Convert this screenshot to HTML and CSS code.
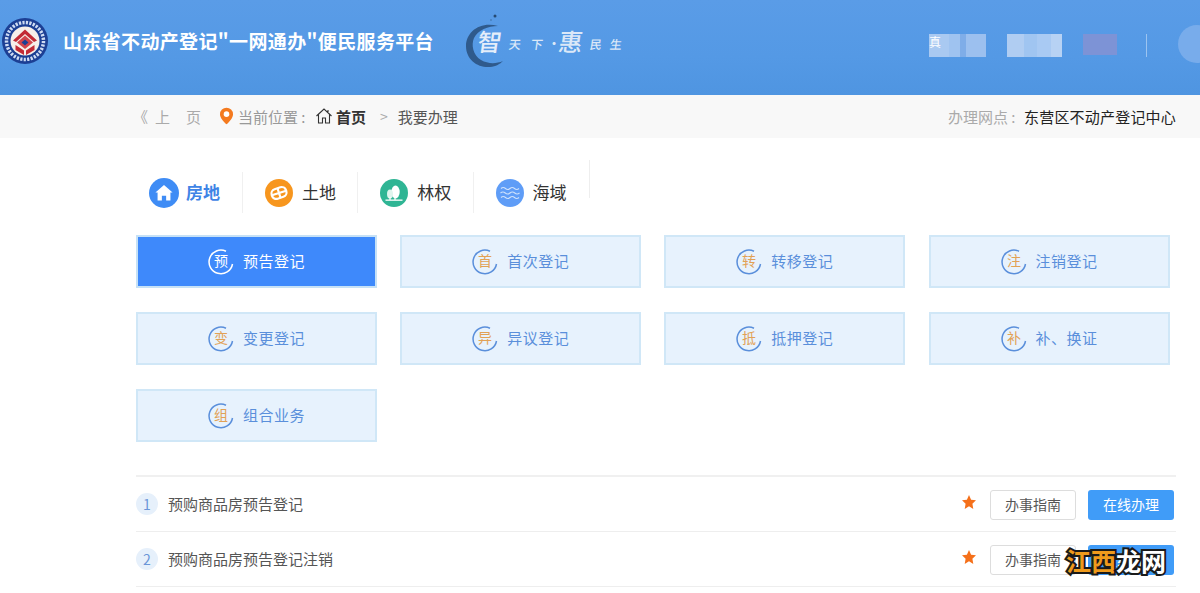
FILE: index.html
```html
<!DOCTYPE html>
<html lang="zh-CN">
<head>
<meta charset="utf-8">
<title>不动产登记</title>
<link rel="stylesheet" href="styles.css">
</head>
<body>
<header class="top">
  <svg class="logo" viewBox="0 0 46 46" aria-hidden="true">
    <circle cx="23" cy="23" r="23" fill="#1c3f94"/>
    <circle cx="23" cy="23" r="18.500" fill="none" stroke="#cfdcf3" stroke-width="3.500" stroke-dasharray="2.200 1.300"/>
    <circle cx="23" cy="23" r="16" fill="#1c3f94"/>
    <circle cx="23" cy="23" r="14.500" fill="#f6efe9"/>
    <path d="M11 22.500 23 11.500 35 22.500 32 24 23 16 14 24Z" fill="#c22a35"/>
    <path d="M15 24.500 23 17.500 31 24.500 23 31Z" fill="#d2444c"/>
    <path d="M19.500 24.500 23 21.500 26.500 24.500 23 27.500Z" fill="#1c3f94"/>
    <path d="M13.500 27 22 32.500V37L13.500 32ZM32.500 27 24 32.500V37L32.500 32Z" fill="#c22a35"/>
  </svg>
  <h1 class="title">山东省不动产登记"一网通办"便民服务平台</h1>
  <div class="slogan">
    <svg class="ink" viewBox="0 0 40 56" aria-hidden="true">
      <path d="M32 14C14 9 0 20 0 34 0 48 12 56 24 55 30 54.500 34 52 37 49 30 52 22 52 15 48 7 43 5 33 8 26 12 18 22 14 32 14Z" fill="#2f5a8c"/>
      <circle cx="29" cy="4" r="1.500" fill="#264a73"/>
      <circle cx="25" cy="8" r=".8" fill="#3f6da3"/>
    </svg>
    <span class="s-big s-first">智</span>
    <span class="s-small">天下</span>
    <span class="s-dot">·</span>
    <span class="s-big s-hui">惠</span>
    <span class="s-small s-last">民生</span>
  </div>
  <div class="user">
    <div class="mosaic mosaic-a"><span class="mark">真</span></div>
    <div class="mosaic mosaic-b"></div>
    <div class="mosaic-c"></div>
    <div class="divider"></div>
    <div class="avatar"></div>
  </div>
</header>

<nav class="crumbs">
  <div class="crumbs-left">
    <span class="back"><span class="back-arrow">《</span><span>上</span><span class="back-gap">页</span></span>
    <svg class="pin" viewBox="0 0 14 18" aria-hidden="true"><path d="M7 0a7 7 0 0 1 7 7c0 4-4 8-7 11C4 15 0 11 0 7a7 7 0 0 1 7-7Z" fill="#f47a1f"/><circle cx="7" cy="7" r="3" fill="#fff"/></svg>
    <span class="here">当前位置 :</span>
    <svg class="home" viewBox="0 0 16 16" aria-hidden="true"><path d="M.5 8 8 1 15.500 8M2.500 6.500V15H6.500V10H9.500V15H13.500V6.500M12 2V5" fill="none" stroke="#333" stroke-width="1.100"/></svg>
    <strong class="home-text">首页</strong>
    <span class="gt">&gt;</span>
    <span class="current">我要办理</span>
  </div>
  <div class="site"><span class="site-label">办理网点 :</span>东营区不动产登记中心</div>
</nav>

<main class="main">
  <div class="tabs">
    <div class="tab tab-first">
      <svg class="tab-icon tab-icon-big" viewBox="0 0 28 28" aria-hidden="true"><circle cx="14" cy="14" r="14" fill="#3f8cf5"/><path d="M14 6.500 22 13.500H20V21H16V16.500H12V21H8V13.500H6Z" fill="#fff"/></svg>
      <span class="tab-text active">房地</span>
    </div>
    <div class="tab">
      <svg class="tab-icon" viewBox="0 0 28 28" aria-hidden="true"><circle cx="14" cy="14" r="14" fill="#f7961e"/><g transform="rotate(-18 14 14)" fill="none" stroke="#fff" stroke-width="2.200"><rect x="6.500" y="9" width="15" height="10" rx="4.500"/><path d="M14 9V19M6.500 14H21.500"/></g></svg>
      <span class="tab-text">土地</span>
    </div>
    <div class="tab">
      <svg class="tab-icon" viewBox="0 0 28 28" aria-hidden="true"><circle cx="14" cy="14" r="14" fill="#2fb594"/><ellipse cx="15.500" cy="13" rx="4.200" ry="6.500" fill="#fff"/><ellipse cx="10" cy="15" rx="3" ry="4.500" fill="#dff5ee"/><path d="M15 18V21M10 18V21" stroke="#fff" stroke-width="1.200"/><rect x="5.500" y="20.500" width="17" height="1.300" fill="#fff"/></svg>
      <span class="tab-text">林权</span>
    </div>
    <div class="tab tab-last">
      <svg class="tab-icon" viewBox="0 0 28 28" aria-hidden="true"><circle cx="14" cy="14" r="14" fill="#5f9df7"/><path d="M5 9.500q2.250-2 4.500 0t4.500 0 4.500 0 4.500 0M4.500 14q2.400-2 4.750 0t4.750 0 4.750 0 4.750 0M5 18.500q2.250-2 4.500 0t4.500 0 4.500 0 4.500 0" fill="none" stroke="#cfe2fc" stroke-width="1.100"/></svg>
      <span class="tab-text">海域</span>
    </div>
    <div class="tab-end"></div>
  </div>

  <div class="cards">
    <a class="card card-on"><svg class="ring" viewBox="0 0 26 26" aria-hidden="true"><path d="M24.500 15A11.800 11.800 0 1 1 18 2.300" fill="none" stroke="currentColor" stroke-width="1.500"/><text x="13" y="17" text-anchor="middle" class="ring-char">预</text></svg><span class="card-text">预告登记</span></a>
    <a class="card"><svg class="ring" viewBox="0 0 26 26" aria-hidden="true"><path d="M24.500 15A11.800 11.800 0 1 1 18 2.300" fill="none" stroke="currentColor" stroke-width="1.500"/><text x="13" y="17" text-anchor="middle" class="ring-char">首</text></svg><span class="card-text">首次登记</span></a>
    <a class="card"><svg class="ring" viewBox="0 0 26 26" aria-hidden="true"><path d="M24.500 15A11.800 11.800 0 1 1 18 2.300" fill="none" stroke="currentColor" stroke-width="1.500"/><text x="13" y="17" text-anchor="middle" class="ring-char">转</text></svg><span class="card-text">转移登记</span></a>
    <a class="card"><svg class="ring" viewBox="0 0 26 26" aria-hidden="true"><path d="M24.500 15A11.800 11.800 0 1 1 18 2.300" fill="none" stroke="currentColor" stroke-width="1.500"/><text x="13" y="17" text-anchor="middle" class="ring-char">注</text></svg><span class="card-text">注销登记</span></a>
    <a class="card"><svg class="ring" viewBox="0 0 26 26" aria-hidden="true"><path d="M24.500 15A11.800 11.800 0 1 1 18 2.300" fill="none" stroke="currentColor" stroke-width="1.500"/><text x="13" y="17" text-anchor="middle" class="ring-char">变</text></svg><span class="card-text">变更登记</span></a>
    <a class="card"><svg class="ring" viewBox="0 0 26 26" aria-hidden="true"><path d="M24.500 15A11.800 11.800 0 1 1 18 2.300" fill="none" stroke="currentColor" stroke-width="1.500"/><text x="13" y="17" text-anchor="middle" class="ring-char">异</text></svg><span class="card-text">异议登记</span></a>
    <a class="card"><svg class="ring" viewBox="0 0 26 26" aria-hidden="true"><path d="M24.500 15A11.800 11.800 0 1 1 18 2.300" fill="none" stroke="currentColor" stroke-width="1.500"/><text x="13" y="17" text-anchor="middle" class="ring-char">抵</text></svg><span class="card-text">抵押登记</span></a>
    <a class="card"><svg class="ring" viewBox="0 0 26 26" aria-hidden="true"><path d="M24.500 15A11.800 11.800 0 1 1 18 2.300" fill="none" stroke="currentColor" stroke-width="1.500"/><text x="13" y="17" text-anchor="middle" class="ring-char">补</text></svg><span class="card-text">补、换证</span></a>
    <a class="card"><svg class="ring" viewBox="0 0 26 26" aria-hidden="true"><path d="M24.500 15A11.800 11.800 0 1 1 18 2.300" fill="none" stroke="currentColor" stroke-width="1.500"/><text x="13" y="17" text-anchor="middle" class="ring-char">组</text></svg><span class="card-text">组合业务</span></a>
  </div>

  <ul class="list">
    <li class="row">
      <span class="num">1</span>
      <span class="row-text">预购商品房预告登记</span>
      <svg class="star" viewBox="0 0 14 14" aria-hidden="true"><path d="M7 0 9.100 4.700 14 5.300 10.400 8.700 11.300 14 7 11.300 2.700 14 3.600 8.700 0 5.300 4.900 4.700Z" fill="#f5701a"/></svg>
      <a class="btn btn-ghost">办事指南</a>
      <a class="btn btn-solid">在线办理</a>
    </li>
    <li class="row">
      <span class="num">2</span>
      <span class="row-text">预购商品房预告登记注销</span>
      <svg class="star" viewBox="0 0 14 14" aria-hidden="true"><path d="M7 0 9.100 4.700 14 5.300 10.400 8.700 11.300 14 7 11.300 2.700 14 3.600 8.700 0 5.300 4.900 4.700Z" fill="#f5701a"/></svg>
      <a class="btn btn-ghost">办事指南</a>
      <a class="btn btn-solid">在线办理</a>
    </li>
  </ul>
</main>

<div class="watermark"><span class="wm-orange">江西</span><span class="wm-white">龙网</span></div>
</body>
</html>
```
FILE: styles.css
```css
* { box-sizing: border-box; }
html, body { margin: 0; padding: 0; }
body {
  position: relative;
  width: 1200px;
  height: 593px;
  overflow: hidden;
  background: #fff;
  font-family: "Noto Sans CJK SC", "Liberation Sans", sans-serif;
  color: #333;
}

/* header */
.top {
  display: flex;
  align-items: flex-start;
  height: 95px;
  padding-left: 2px;
  background: linear-gradient(180deg, #5a9ce7 0%, #5499e5 60%, #4f95e1 100%);
}
.logo { width: 46px; height: 46px; margin-top: 18px; flex: none; }
.title {
  margin: 26px 0 0 15px;
  font-size: 19px;
  line-height: 30px;
  font-weight: 700;
  color: #fff;
  white-space: nowrap;
  letter-spacing: 0.35px;
}
.slogan {
  position: relative;
  display: flex;
  align-items: center;
  width: 158px;
  height: 56px;
  margin: 12px 0 0 32px;
  padding-left: 12px;
  color: #dbe8f8;
  font-family: "Noto Sans CJK JP", "Noto Sans CJK SC", sans-serif;
}
.ink { position: absolute; left: 0; top: 0; width: 40px; height: 56px; }
.s-big { position: relative; font-size: 24px; line-height: 56px; font-weight: 500; transform: skewX(-8deg); }
.s-first { color: #e4eefa; margin-top: 1px; }
.s-hui { margin-left: 6px; margin-top: 2px; }
.s-small {
  margin: 8px 0 0 7px;
  font-size: 12px;
  line-height: 16px;
  font-weight: 500;
  letter-spacing: 10px;
  white-space: nowrap;
  transform: skewX(-8deg);
}
.s-last { margin-left: 7px; letter-spacing: 8px; }
.s-dot { width: 5px; margin: 8px 0 0 -5px; font-size: 12px; font-weight: 700; line-height: 16px; }
.user { display: flex; align-items: flex-start; margin-left: auto; padding-top: 34px; }
.mosaic { position: relative; height: 23px; }
.mosaic-a {
  width: 57px;
  background: linear-gradient(90deg, #a9c9f1 0 35%, #9fc3f0 35% 55%, #7fade8 55% 65%, #9cc0ef 65% 100%);
}
.mark { position: absolute; left: 0; top: 0; font-size: 12px; line-height: 16px; color: #fff; }
.mosaic-b {
  width: 55px;
  margin-left: 21px;
  background: linear-gradient(90deg, #b0cdf2 0 30%, #a0c5f1 30% 55%, #a9caf3 55% 80%, #b7d2f4 80% 100%);
}
.mosaic-c { width: 34px; height: 21px; margin-left: 21px; background: #7d93d6; }
.divider { width: 1px; height: 23px; margin-left: 29px; background: #9cc4f0; }
.avatar {
  flex: none;
  width: 38px;
  height: 38px;
  margin: -9px -16px 0 31px;
  border-radius: 50%;
  background: #78aceb;
}

/* breadcrumb bar */
.crumbs {
  display: flex;
  align-items: center;
  justify-content: space-between;
  height: 43px;
  padding: 0 24px 1px 136px;
  background: #f8f8f8;
  font-size: 15px;
  white-space: nowrap;
}
.crumbs-left { display: flex; align-items: center; }
.back { display: flex; width: 84px; color: #aaa; }
.back-arrow { margin: 0 7px 0 -3px; }
.back-gap { margin-left: 16px; }
.pin { width: 13px; height: 18px; margin-right: 5px; }
.here { width: 78px; color: #999; }
.home { width: 16px; height: 16px; margin-right: 4px; }
.home-text { font-weight: 700; color: #333; }
.gt { margin: 0 10px 0 14px; color: #aaa; font-size: 14px; }
.current { color: #555; }
.site { color: #222; letter-spacing: 0.2px; }
.site-label { display: inline-block; width: 76px; color: #aaa; letter-spacing: 0; }

/* main */
.main { width: 1040px; margin-left: 136px; }
.tabs { display: flex; align-items: flex-start; height: 97px; padding-top: 34px; }
.tab {
  display: flex;
  align-items: center;
  width: 115.300px;
  height: 41px;
  padding-left: 22px;
  border-right: 1px solid #f0f0f0;
}
.tab-first { width: 107px; padding-left: 13px; }
.tab-last { border-right: 0; }
.tab-icon { width: 28px; height: 28px; margin-right: 9px; flex: none; }
.tab-icon-big { width: 30px; height: 30px; margin-right: 7px; }
.tab-text { padding-bottom: 3px; font-size: 17px; color: #333; white-space: nowrap; }
.tab-text.active { color: #3f84e6; font-weight: 700; }
.tab-end { width: 1px; height: 38px; margin-top: -12px; background: #eee; }

.cards {
  display: grid;
  grid-template-columns: repeat(4, 241px);
  grid-auto-rows: 53px;
  column-gap: 23.200px;
  row-gap: 24px;
}
.card {
  display: flex;
  align-items: center;
  justify-content: center;
  border: 2px solid #d0e7f7;
  background: #e7f2fd;
  color: #5a8fdb;
  font-size: 15px;
  letter-spacing: 0.5px;
  white-space: nowrap;
}
.card-text { padding-bottom: 2px; }
.card-on { background: #3e89fb; border-color: #c6e1f6; color: #fff; }
.ring { width: 26px; height: 26px; margin-right: 9px; flex: none; }
.ring-char { font-size: 14px; fill: #e2a155; letter-spacing: 0; }
.card-on .ring-char { fill: #fff; }

/* list */
.list { margin: 33px 0 0; padding: 0; list-style: none; border-top: 2px solid #f0f0f0; }
.row {
  display: flex;
  align-items: center;
  height: 55px;
  border-bottom: 1px solid #eee;
}
.num {
  flex: none;
  width: 22px;
  height: 22px;
  margin-right: 10px;
  border-radius: 50%;
  background: #e6f0fb;
  color: #6a96d8;
  font-size: 14px;
  line-height: 22px;
  text-align: center;
}
.row-text { padding-bottom: 2px; font-size: 15px; color: #555; white-space: nowrap; }
.star { width: 14px; height: 14px; margin: -4px 14px 0 auto; flex: none; }
.btn {
  display: flex;
  align-items: center;
  justify-content: center;
  width: 86px;
  height: 30px;
  margin-top: 2px;
  padding-bottom: 2px;
  border-radius: 3px;
  font-size: 14px;
}
.btn-ghost { border: 1px solid #ddd; background: #fff; color: #555; }
.btn-solid { margin-left: 12px; margin-right: 2px; background: #409cf8; color: #fff; }

/* watermark laid over the page */
.watermark {
  position: absolute;
  left: 1066px;
  top: 544px;
  font-size: 25px;
  line-height: 32px;
  font-weight: 700;
  white-space: nowrap;
  -webkit-text-stroke: 4px #1a1a1a;
  paint-order: stroke fill;
}
.wm-orange { color: #ef9a1c; }
.wm-white { color: #fff; }
```
